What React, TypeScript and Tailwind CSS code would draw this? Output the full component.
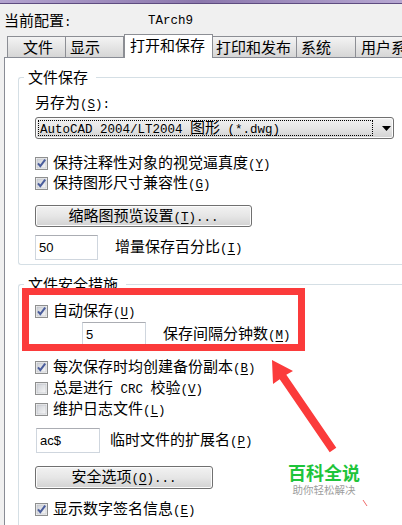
import React from 'react';

const cjk = "font-['Noto_Sans_CJK_SC',sans-serif]";
const mono = "font-['Liberation_Mono',monospace] text-[12.5px]";

// accelerator key in half-width parentheses
const K = ({ k }: { k: string }) => (
    <span className={mono}>
        (<span className="underline underline-offset-[2px]">{k}</span>)
    </span>
);

const Check = ({ checked }: { checked?: boolean }) => (
    <svg width="13" height="13" viewBox="0 0 13 13" className="shrink-0">
        <defs>
            <linearGradient id="cbg" x1="0" y1="0" x2="1" y2="1">
                <stop offset="0" stopColor="#cdd0d6" />
                <stop offset="1" stopColor="#f7f7f7" />
            </linearGradient>
        </defs>
        <rect x="0.5" y="0.5" width="12" height="12" fill="#f4f4f4" stroke="#8e8f8f" />
        <rect x="2" y="2" width="9" height="9" fill="url(#cbg)" stroke="#b8bcc4" strokeWidth="0.6" />
        {checked && <path d="M3 6.4 L5.3 9.2 L10.2 2.6" fill="none" stroke="#4a5d9c" strokeWidth="2" />}
    </svg>
);

const Row = ({ checked, h = 'h-[20px]', mt, children }: { checked?: boolean; h?: string; mt: string; children: React.ReactNode }) => (
    <div className={`flex items-center gap-[5px] ${h} ${mt}`}>
        <Check checked={checked} />
        <span className="whitespace-pre">{children}</span>
    </div>
);

const btn = 'flex items-center justify-center rounded-[3px] border border-[#707070] bg-gradient-to-b from-[#f2f2f2] via-[#e6e6e6] to-[#d2d2d2] shadow-[inset_0_0_0_1px_#fcfcfc]';
const input = "border border-[#cfd6de] border-t-[#abadb3] bg-white pl-[3px] font-['Liberation_Sans',sans-serif] text-[13px] flex items-center";

const tabOff = 'h-[21px] shrink-0 whitespace-nowrap border border-b-0 border-[#8c8e94] bg-gradient-to-b from-[#f4f4f4] to-[#d6d6d6]';

export default function App() {
    return (
        <div className={`relative h-[525px] w-[402px] overflow-hidden bg-[#f0f0f0] text-[15px] leading-[20px] text-black ${cjk}`}>
            {/* title strip */}
            <div className="h-[4px] border-b border-[#5e4c80] bg-gradient-to-r from-[#b3a3cf] via-[#8c78ad] to-[#b7a8d2]" />

            {/* current profile */}
            <div className="flex h-[30px] items-center pl-[4px] pt-[4px]">
                <span className="w-[144px]">
                    当前配置<span className={mono}>:</span>
                </span>
                <span className={mono}>TArch9</span>
            </div>

            {/* tabs */}
            <div className="flex h-[23px] items-end pl-[7px]">
                <div className={`${tabOff} w-[59px] pl-[15px]`}>文件</div>
                <div className={`${tabOff} w-[58px] border-l-0 pl-[4px]`}>显示</div>
                <div className="relative z-10 -mb-px h-[24px] w-[89px] shrink-0 whitespace-nowrap border border-b-0 border-[#8c8e94] bg-white pl-[5px]">打开和保存</div>
                <div className={`${tabOff} w-[84px] border-l-0 pl-[3px]`}>打印和发布</div>
                <div className={`${tabOff} w-[59px] border-l-0 pl-[4px]`}>系统</div>
                <div className={`${tabOff} w-[80px] border-l-0 pl-[5px]`}>用户系统配置</div>
            </div>

            {/* panel */}
            <div className="ml-[4px] h-[500px] border-l border-t border-[#898c95] bg-white pl-[13px]">
                <fieldset className="mt-[9px] w-[420px] rounded-l-[3px] border border-r-0 border-[#d5dfe5]">
                    <legend className="ml-[5px] pl-[4px] pr-[8px]">文件保存</legend>
                    <div className="pb-[4px] pl-[16px]">
                        <div className="mt-[5px]">
                            另存为<K k="S" />
                            <span className={mono}>:</span>
                        </div>
                        <div className={`${btn} mt-[2px] h-[22px] w-[359px] justify-start rounded-[2px] p-[2px]`}>
                            <div className="flex h-full w-[336px] items-center border border-dotted border-black pl-px">
                                <span className="whitespace-pre">
                                    <span className={mono}>AutoCAD 2004/LT2004 </span>图形<span className={mono}> (*.dwg)</span>
                                </span>
                            </div>
                            <svg width="9" height="5" viewBox="0 0 9 5" className="ml-[9px]">
                                <path d="M0 0 H9 L4.5 5 Z" fill="#000" />
                            </svg>
                        </div>
                        <Row checked mt="mt-[14px]">
                            保持注释性对象的视觉逼真度<K k="Y" />
                        </Row>
                        <Row checked mt="">
                            保持图形尺寸兼容性<K k="G" />
                        </Row>
                        <div className={`${btn} mt-[12px] h-[22px] w-[217px]`}>
                            <span>
                                缩略图预览设置<K k="T" />
                                <span className={mono}>...</span>
                            </span>
                        </div>
                        <div className="mt-[8px] flex items-center">
                            <div className={`${input} h-[25px] w-[63px]`}>50</div>
                            <span className="ml-[17px]">
                                增量保存百分比<K k="I" />
                            </span>
                        </div>
                    </div>
                </fieldset>

                <fieldset className="mt-[9px] w-[420px] rounded-l-[3px] border border-r-0 border-[#d5dfe5]">
                    <legend className="ml-[5px] pl-[4px] pr-[8px]">文件安全措施</legend>
                    <div className="pb-[20px] pl-[16px]">
                        <Row checked mt="mt-[7px]">
                            自动保存<K k="U" />
                        </Row>
                        <div className="mt-[1px] flex items-center pl-[47px]">
                            <div className={`${input} h-[25px] w-[64px]`}>5</div>
                            <span className="ml-[17px]">
                                保存间隔分钟数<K k="M" />
                            </span>
                        </div>
                        <Row checked h="h-[21px]" mt="mt-[10px]">
                            每次保存时均创建备份副本<K k="B" />
                        </Row>
                        <Row h="h-[21px]" mt="">
                            总是进行<span className={mono}>{' CRC '}</span>校验<K k="V" />
                        </Row>
                        <Row h="h-[21px]" mt="">
                            维护日志文件<K k="L" />
                        </Row>
                        <div className="mt-[8px] flex items-center pl-px">
                            <div className={`${input} h-[25px] w-[64px]`}>ac$</div>
                            <span className="ml-[10px]">
                                临时文件的扩展名<K k="P" />
                            </span>
                        </div>
                        <div className={`${btn} mt-[13px] h-[23px] w-[178px]`}>
                            <span>
                                安全选项<K k="O" />
                                <span className={mono}>...</span>
                            </span>
                        </div>
                        <Row checked mt="mt-[10px]">
                            显示数字签名信息<K k="E" />
                        </Row>
                    </div>
                </fieldset>
            </div>

            {/* annotation: red frame */}
            <div className="pointer-events-none absolute left-[22px] top-[288px] h-[63px] w-[283px] border-[7px] border-[#fb3b3b]" />

            {/* annotation: arrow */}
            <svg className="pointer-events-none absolute left-0 top-0" width="402" height="525">
                <polygon
                    points="272,360 293,371 286.3,374.7 336.3,447.7 329.7,452.3 279.7,379.3 273,384"
                    fill="#fb3b3b"
                />
                <line x1="363" y1="500" x2="367" y2="506" stroke="#f06a6a" strokeWidth="1" />
            </svg>

            {/* watermark */}
            <div className="pointer-events-none absolute left-[288px] top-[461px] flex flex-col items-center">
                <span className="text-[18px] font-bold leading-[22px] text-[#1ec43a]">百科全说</span>
                <span className="mt-px text-[10.5px] leading-[12px] text-[#9c9c9c]">助你轻松解决</span>
            </div>
        </div>
    );
}
